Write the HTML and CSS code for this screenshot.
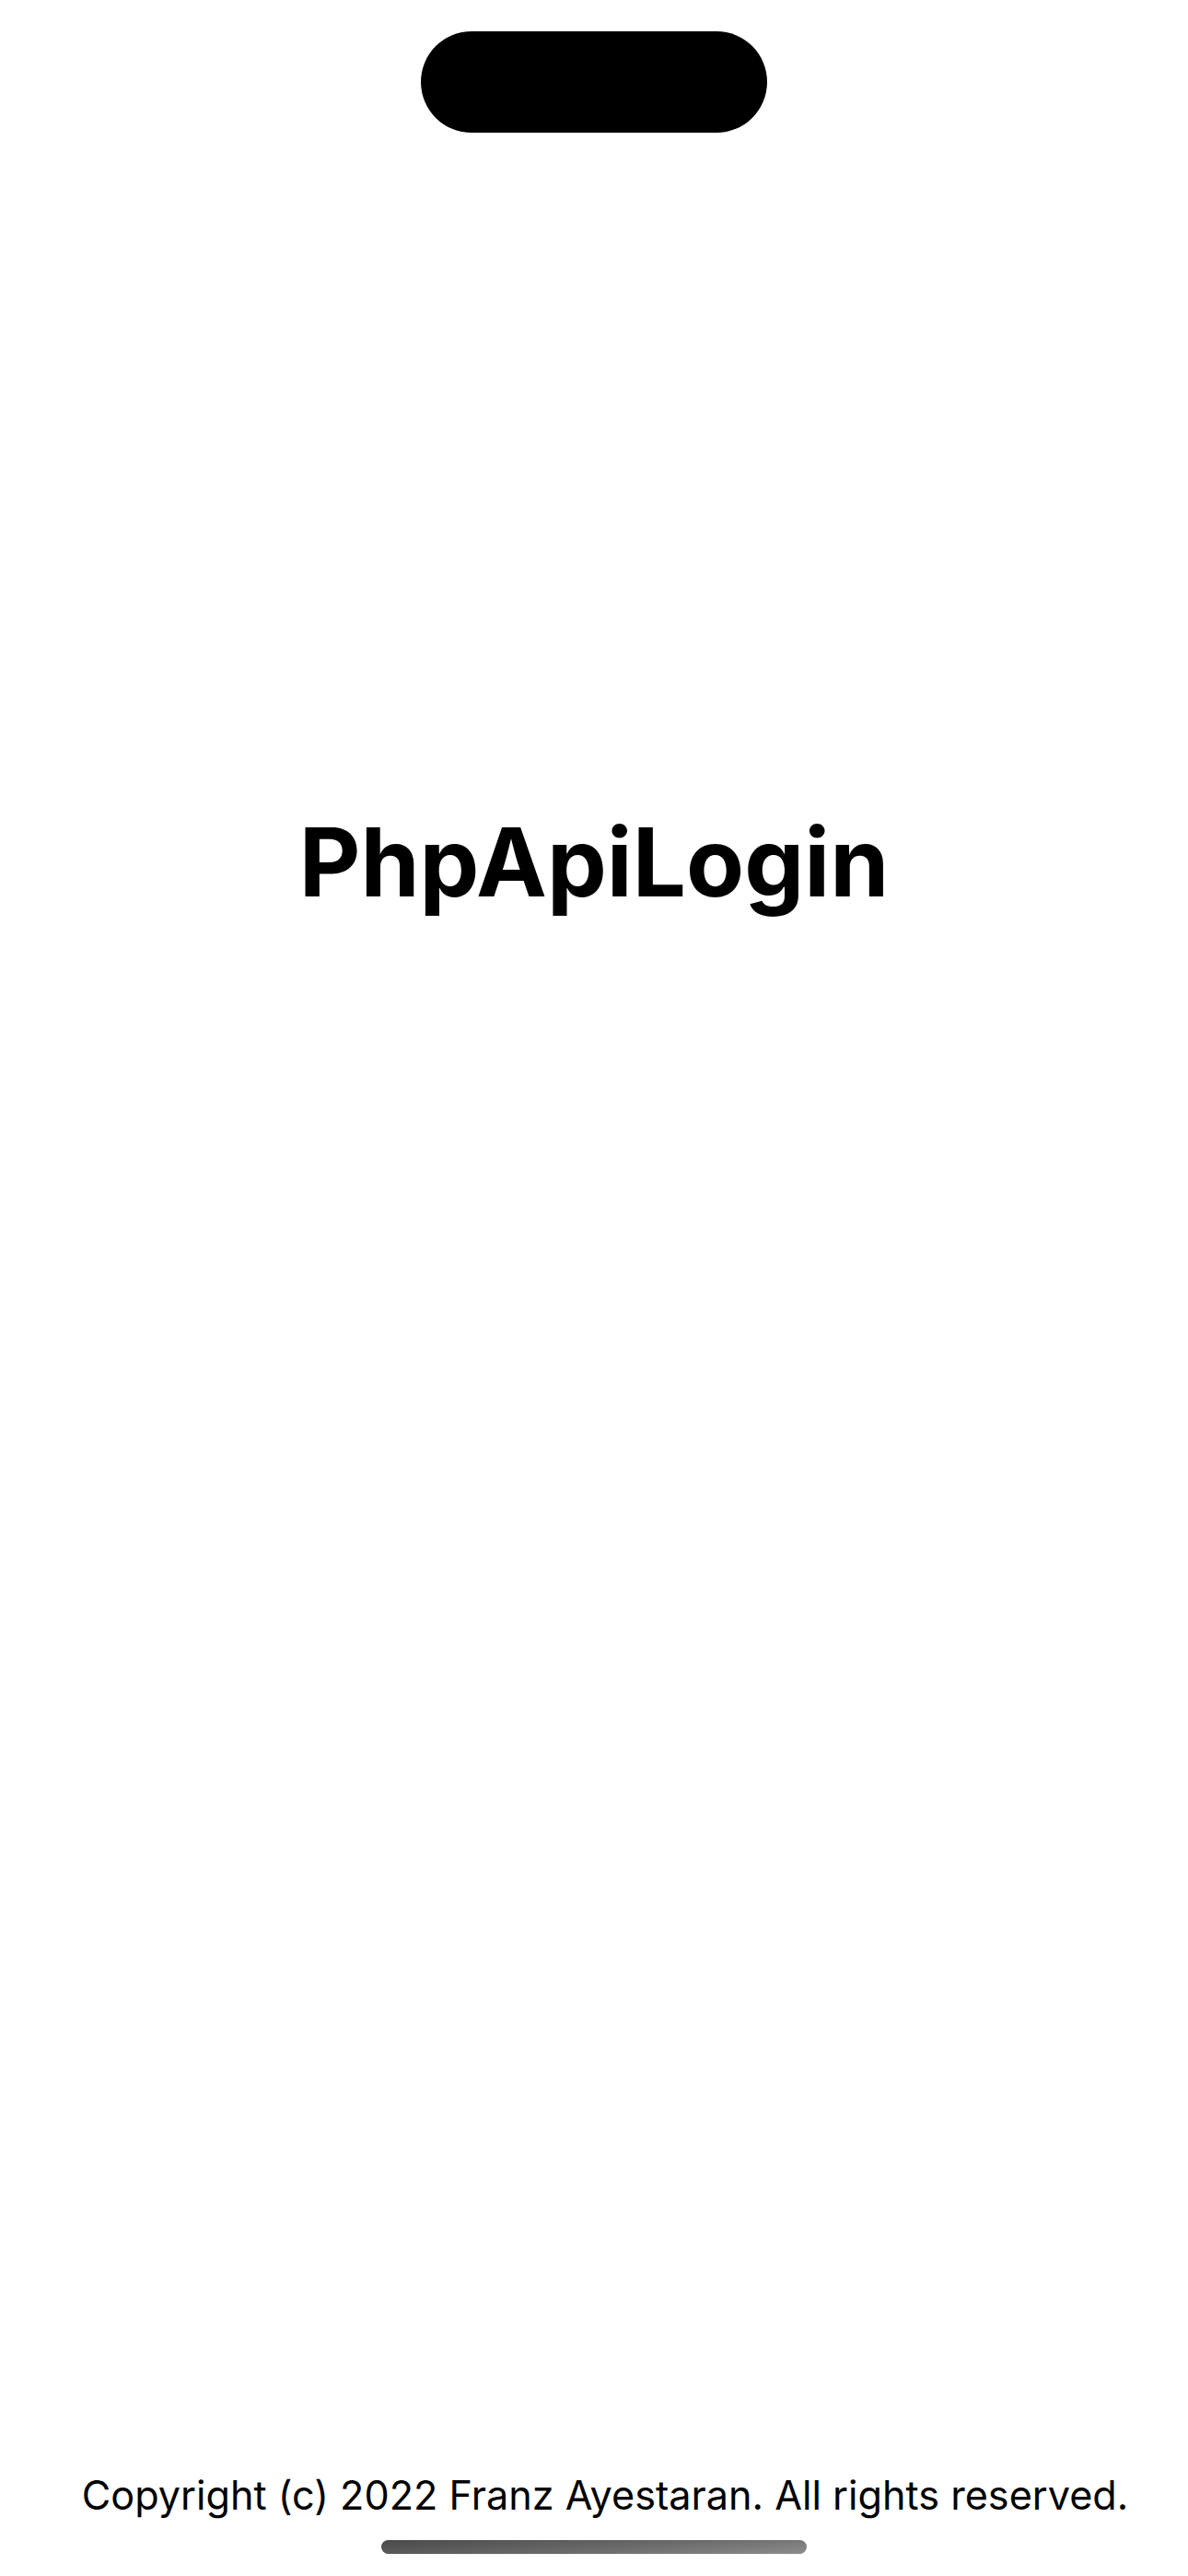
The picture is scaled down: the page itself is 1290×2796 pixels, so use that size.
FILE: index.html
```html
<!DOCTYPE html>
<html lang="en">
<head>
<meta charset="utf-8">
<title>PhpApiLogin</title>
<link rel="stylesheet" href="styles.css">
</head>
<body>
<div class="screen">
  <div class="island"></div>
  <h1 class="title">PhpApiLogin</h1>
  <div class="spacer"></div>
  <p class="copyright">Copyright (c) 2022 Franz Ayestaran. All rights reserved.</p>
  <div class="home-indicator"></div>
</div>
</body>
</html>
```
FILE: styles.css
```css
html, body {
  margin: 0;
  padding: 0;
  background: #ffffff;
}
.screen {
  width: 1290px;
  height: 2796px;
  display: flex;
  flex-direction: column;
  align-items: center;
  font-family: Inter, "Noto Sans", "Liberation Sans", sans-serif;
  color: #000000;
  overflow: hidden;
}
.island {
  margin-top: 34px;
  width: 376px;
  height: 110px;
  border-radius: 55px;
  background: #000000;
  flex: none;
}
.title {
  margin: 728px 0 0 0;
  font-size: 103px;
  line-height: 128px;
  font-weight: 700;
  letter-spacing: 0;
}
.spacer {
  flex: 1;
}
.copyright {
  margin: 0 0 0 24px;
  font-size: 43.2px;
  line-height: 52px;
  font-weight: 400;
}
.home-indicator {
  margin: 23px 0 24px 0;
  width: 462px;
  height: 15px;
  border-radius: 8px;
  background: linear-gradient(175deg, #4a4a4a 0%, #6a6a6a 55%, #8c8c8c 100%);
  flex: none;
}
```
